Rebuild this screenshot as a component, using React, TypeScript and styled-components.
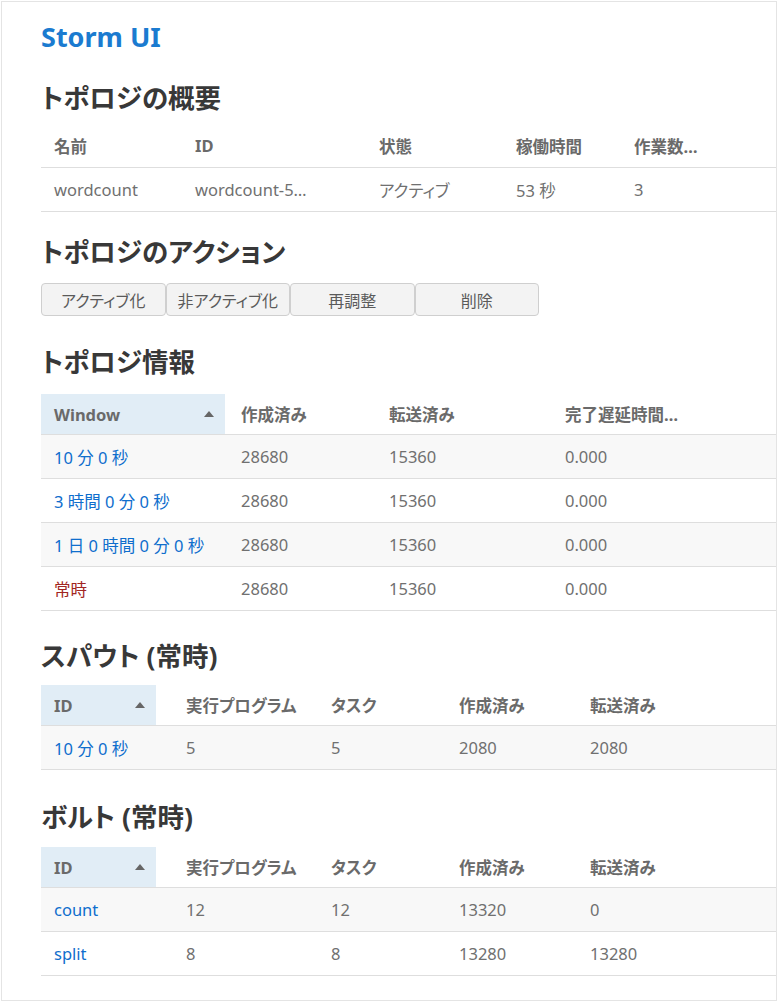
import React from "react";
import styled, { createGlobalStyle } from "styled-components";

const Global = createGlobalStyle`
  html, body { margin: 0; padding: 0; background: #ffffff; }
  body {
    font-family: "Noto Sans", "Noto Sans CJK JP", sans-serif;
    font-feature-settings: "palt";
    color: #6e6e6e;
  }
  * { box-sizing: border-box; }
`;

const Outer = styled.div`
  padding: 1px 1px 1px 1px;
  width: 778px;
`;

const Frame = styled.div`
  width: 776px;
  height: 1000px;
  border: 1px solid #e4e4e4;
  padding: 19px 0 0 39px;
  display: flex;
  flex-direction: column;
  overflow: hidden;
`;

const Title = styled.h1`
  margin: 0;
  font-size: 27px;
  line-height: 32px;
  font-weight: 700;
  color: #1b7bd0;
`;

const Heading = styled.h2<{ $top: number; $bottom: number }>`
  margin: ${(p) => p.$top}px 0 ${(p) => p.$bottom}px 0;
  font-size: 26.5px;
  line-height: 36px;
  font-weight: 700;
  color: #383838;
`;

const Table = styled.div`
  display: flex;
  flex-direction: column;
  width: 100%;
`;

const Row = styled.div<{ $cols: string; $h: number; $striped?: boolean }>`
  display: grid;
  grid-template-columns: ${(p) => p.$cols};
  height: ${(p) => p.$h}px;
  border-bottom: 1px solid #dedede;
  background: ${(p) => (p.$striped ? "#f8f8f8" : "#ffffff")};
`;

const Cell = styled.div<{ $pad: number; $head?: boolean }>`
  display: flex;
  align-items: center;
  padding-left: ${(p) => p.$pad}px;
  font-size: 16.5px;
  font-weight: ${(p) => (p.$head ? 700 : 400)};
  color: ${(p) => (p.$head ? "#6a6a6a" : "#707070")};
  white-space: nowrap;
`;

const SortCell = styled(Cell)`
  background: #e1edf6;
  justify-content: space-between;
  padding-right: 11px;
`;

const Arrow = styled.span`
  width: 0;
  height: 0;
  border-left: 5px solid transparent;
  border-right: 5px solid transparent;
  border-bottom: 6px solid #666666;
`;

const Link = styled.span<{ $tone?: "blue" | "red" }>`
  color: ${(p) => (p.$tone === "red" ? "#a12622" : "#0f6ecd")};
`;

const ButtonGroup = styled.div`
  display: flex;
`;

const Button = styled.button`
  width: 124.5px;
  height: 33px;
  border: 1px solid #cfcfcf;
  border-radius: 4px;
  background: #f3f3f3;
  color: #5a5a5a;
  font-family: "Noto Sans", "Noto Sans CJK JP", sans-serif;
  font-feature-settings: "palt";
  font-size: 16px;
  padding: 0;
`;

type CellValue = { text: string; tone?: "blue" | "red" };

function DataTable(props: {
  cols: string;
  pad: number;
  headH: number;
  rowH: number;
  sortable?: boolean;
  striped?: boolean;
  headers: string[];
  rows: CellValue[][];
}) {
  const { cols, pad, headH, rowH, sortable, striped, headers, rows } = props;
  return (
    <Table>
      <Row $cols={cols} $h={headH}>
        {headers.map((h, i) =>
          i === 0 && sortable ? (
            <SortCell key={i} $pad={13} $head>
              {h}
              <Arrow />
            </SortCell>
          ) : (
            <Cell key={i} $pad={i === 0 ? 13 : pad} $head>
              {h}
            </Cell>
          )
        )}
      </Row>
      {rows.map((r, ri) => (
        <Row key={ri} $cols={cols} $h={rowH} $striped={striped && ri % 2 === 0}>
          {r.map((c, ci) => (
            <Cell key={ci} $pad={ci === 0 ? 13 : pad}>
              {c.tone ? <Link $tone={c.tone}>{c.text}</Link> : c.text}
            </Cell>
          ))}
        </Row>
      ))}
    </Table>
  );
}

const t = (text: string, tone?: "blue" | "red"): CellValue => ({ text, tone });

export default function App() {
  const compCols = "115px 145px 128px 131px 1fr";
  const compHeaders = ["ID", "実行プログラム", "タスク", "作成済み", "転送済み"];
  return (
    <>
      <Global />
      <Outer>
        <Frame>
          <Title>Storm UI</Title>

          <Heading $top={27} $bottom={8}>トポロジの概要</Heading>
          <DataTable
            cols="141px 184px 137px 118px 1fr"
            pad={13}
            headH={44}
            rowH={44}
            headers={["名前", "ID", "状態", "稼働時間", "作業数…"]}
            rows={[[t("wordcount"), t("wordcount-5…"), t("アクティブ"), t("53 秒"), t("3")]]}
          />

          <Heading $top={22} $bottom={13}>トポロジのアクション</Heading>
          <ButtonGroup>
            <Button>アクティブ化</Button>
            <Button>非アクティブ化</Button>
            <Button>再調整</Button>
            <Button>削除</Button>
          </ButtonGroup>

          <Heading $top={28} $bottom={14}>トポロジ情報</Heading>
          <DataTable
            cols="184px 148px 176px 1fr"
            pad={16}
            headH={41}
            rowH={44}
            sortable
            striped
            headers={["Window", "作成済み", "転送済み", "完了遅延時間…"]}
            rows={[
              [t("10 分 0 秒", "blue"), t("28680"), t("15360"), t("0.000")],
              [t("3 時間 0 分 0 秒", "blue"), t("28680"), t("15360"), t("0.000")],
              [t("1 日 0 時間 0 分 0 秒", "blue"), t("28680"), t("15360"), t("0.000")],
              [t("常時", "red"), t("28680"), t("15360"), t("0.000")],
            ]}
          />

          <Heading $top={27} $bottom={11}>スパウト (常時)</Heading>
          <DataTable
            cols={compCols}
            pad={30}
            headH={41}
            rowH={44}
            sortable
            striped
            headers={compHeaders}
            rows={[[t("10 分 0 秒", "blue"), t("5"), t("5"), t("2080"), t("2080")]]}
          />

          <Heading $top={29} $bottom={12}>ボルト (常時)</Heading>
          <DataTable
            cols={compCols}
            pad={30}
            headH={41}
            rowH={44}
            sortable
            striped
            headers={compHeaders}
            rows={[
              [t("count", "blue"), t("12"), t("12"), t("13320"), t("0")],
              [t("split", "blue"), t("8"), t("8"), t("13280"), t("13280")],
            ]}
          />
        </Frame>
      </Outer>
    </>
  );
}
